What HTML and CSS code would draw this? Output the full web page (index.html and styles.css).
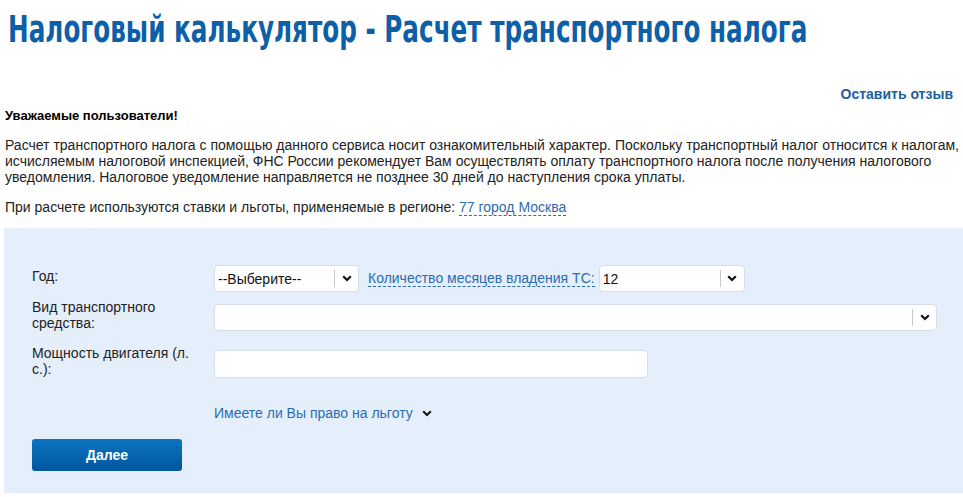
FILE: index.html
```html
<!DOCTYPE html>
<html lang="ru">
<head>
<meta charset="utf-8">
<title>Налоговый калькулятор</title>
<link rel="stylesheet" href="styles.css">
</head>
<body>
<h1 class="title"><span class="title-text">Налоговый калькулятор - Расчет транспортного налога</span></h1>
<div class="feedback"><a href="#" class="feedback-link">Оставить отзыв</a></div>
<p class="greeting">Уважаемые пользователи!</p>
<p class="notice">Расчет транспортного налога с помощью данного сервиса носит ознакомительный характер. Поскольку транспортный налог относится к налогам, исчисляемым налоговой инспекцией, ФНС России рекомендует Вам осуществлять оплату транспортного налога после получения налогового уведомления. Налоговое уведомление направляется не позднее 30 дней до наступления срока уплаты.</p>
<p class="region">При расчете используются ставки и льготы, применяемые в регионе: <a href="#" class="dashed">77 город Москва</a></p>

<section class="calc">
  <div class="row row-year">
    <div class="label">Год:</div>
    <div class="select select-year">
      <span class="select-value">--Выберите--</span>
      <span class="select-arrow"><svg width="10" height="7" viewBox="0 0 10 7"><path d="M1.2 1.2 L5 5 L8.8 1.2" fill="none" stroke="#111" stroke-width="2.2"/></svg></span>
    </div>
    <a href="#" class="dashed months-link">Количество месяцев владения ТС:</a>
    <div class="select select-months">
      <span class="select-value">12</span>
      <span class="select-arrow"><svg width="10" height="7" viewBox="0 0 10 7"><path d="M1.2 1.2 L5 5 L8.8 1.2" fill="none" stroke="#111" stroke-width="2.2"/></svg></span>
    </div>
  </div>
  <div class="row row-type">
    <div class="label">Вид транспортного средства:</div>
    <div class="select select-type">
      <span class="select-value"></span>
      <span class="select-arrow"><svg width="10" height="7" viewBox="0 0 10 7"><path d="M1.2 1.2 L5 5 L8.8 1.2" fill="none" stroke="#111" stroke-width="2.2"/></svg></span>
    </div>
  </div>
  <div class="row row-power">
    <div class="label">Мощность двигателя (л. с.):</div>
    <div class="input"></div>
  </div>
  <div class="benefit">
    <a href="#" class="benefit-link">Имеете ли Вы право на льготу</a>
    <svg class="benefit-arrow" width="10" height="7" viewBox="0 0 10 7"><path d="M1.2 1.2 L5 5 L8.8 1.2" fill="none" stroke="#111" stroke-width="2"/></svg>
  </div>
  <button class="next" type="button">Далее</button>
</section>
</body>
</html>
```

FILE: styles.css
```css
html, body {
  margin: 0;
  padding: 0;
  background: #fff;
}
body {
  font-family: "Liberation Sans", Arial, sans-serif;
  font-size: 14px;
  color: #222;
  width: 963px;
  overflow: hidden;
}
a { text-decoration: none; }

.title {
  margin: 0;
  padding: 5px 0 0 8px;
  height: 49px;
  overflow: hidden;
  font-family: "DejaVu Sans Condensed", "DejaVu Sans", sans-serif;
  font-stretch: condensed;
  font-weight: bold;
  font-size: 38px;
  line-height: 48px;
  color: #0d5fa8;
  white-space: nowrap;
}
.title-text {
  display: inline-block;
  transform: scaleX(0.722);
  transform-origin: left center;
}

.feedback {
  margin-top: 32px;
  text-align: right;
  padding-right: 10px;
  line-height: 16px;
}
.feedback-link {
  color: #1b5f9f;
  font-weight: bold;
  font-size: 14px;
}

.greeting {
  margin: 6px 0 0 5px;
  font-weight: bold;
  font-size: 13px;
  line-height: 16px;
  color: #000;
}
.notice {
  margin: 13px 0 0 5px;
  line-height: 16px;
  color: #222;
}
.region {
  margin: 14px 0 0 5px;
  line-height: 16px;
  color: #222;
}
.dashed {
  color: #2b6cb0;
  border-bottom: 1px dashed #2b6cb0;
}

.calc {
  margin: 13px 0 0 4px;
  background: #e5effb;
  padding: 37px 0 22px 28px;
}
.row {
  display: flex;
  align-items: center;
}
.row-type { margin-top: 7px; }
.row-power { margin-top: 9px; }
.label {
  width: 170px;
  padding-right: 12px;
  margin-bottom: 5px;
  line-height: 16px;
  color: #222;
}
.select {
  box-sizing: border-box;
  height: 27px;
  background: #fff;
  border: 1px solid #d6dde6;
  border-radius: 4px;
  display: flex;
  align-items: center;
}
.select-value {
  flex: 1;
  padding-left: 3px;
  color: #111;
}
.select-arrow {
  width: 23px;
  height: 17px;
  border-left: 1px solid #c9c9c9;
  display: flex;
  align-items: center;
  justify-content: center;
}
.select-year { width: 145px; }
.months-link { margin-left: 9px; margin-right: 4px; }
.select-months { width: 146px; }
.select-type { width: 723px; }
.input {
  box-sizing: border-box;
  width: 434px;
  height: 28px;
  background: #fff;
  border: 1px solid #d6dde6;
  border-radius: 4px;
}
.benefit {
  margin: 23px 0 0 182px;
  display: flex;
  align-items: center;
  line-height: 16px;
}
.benefit-link { color: #2b6cb0; }
.benefit-arrow { margin-left: 9px; }
.next {
  display: block;
  margin-top: 18px;
  width: 150px;
  height: 32px;
  border: none;
  border-radius: 3px;
  background: linear-gradient(#0b75c0, #0055a0);
  color: #fff;
  font-family: "Liberation Sans", Arial, sans-serif;
  font-weight: bold;
  font-size: 14px;
}
```
